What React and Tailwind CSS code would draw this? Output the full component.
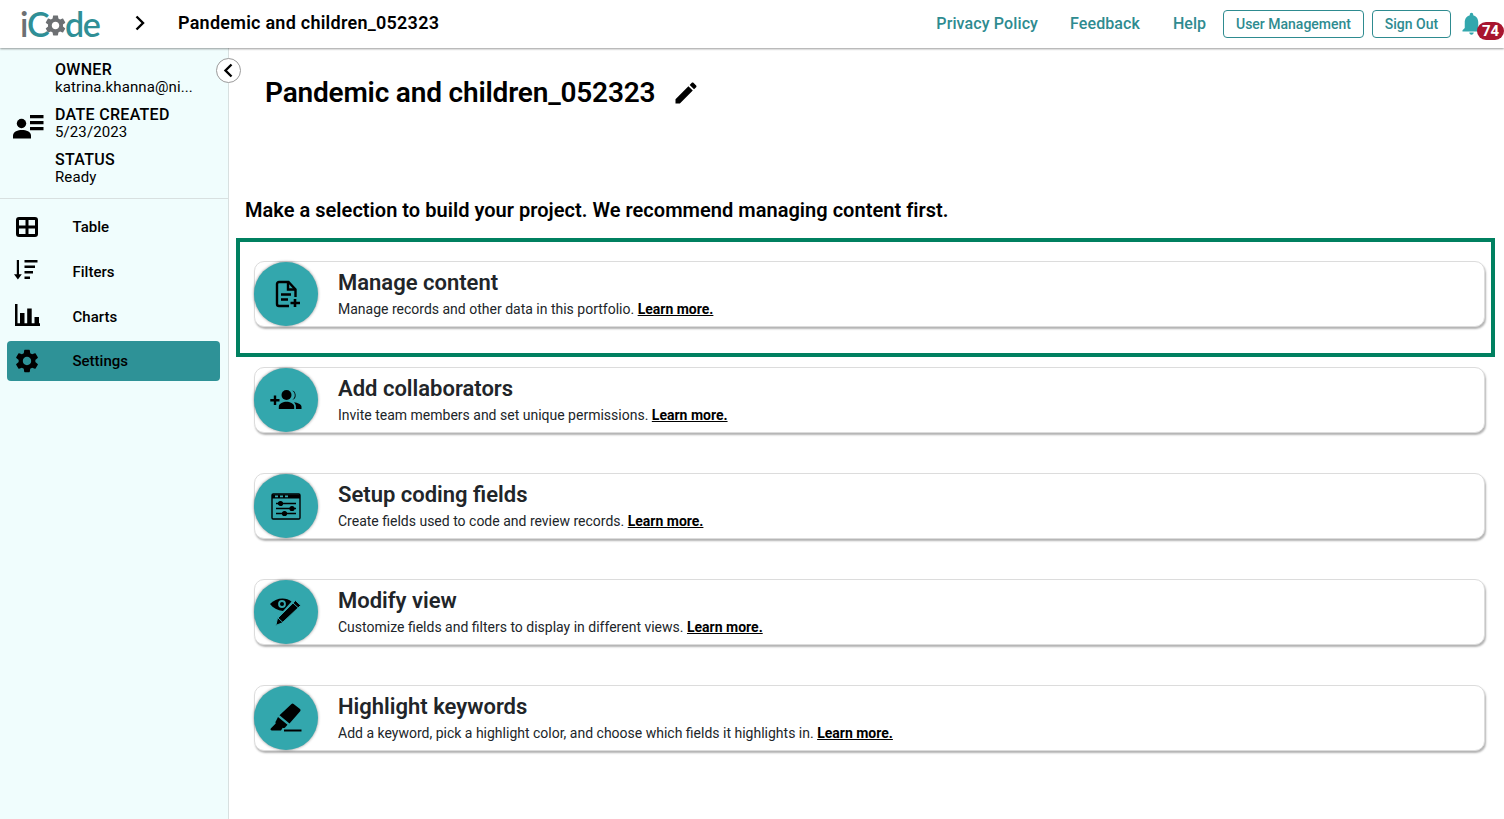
import React from 'react';

const Icon = ({ d, size = 24, className = '', children }) => (
  <svg width={size} height={size} viewBox="0 0 24 24" fill="currentColor" className={className}>
    {d ? <path d={d} /> : children}
  </svg>
);

const gearPath =
  'M19.14 12.94c.04-.3.06-.61.06-.94 0-.32-.02-.64-.07-.94l2.03-1.58c.18-.14.23-.41.12-.61l-1.92-3.32c-.12-.22-.37-.29-.59-.22l-2.39.96c-.5-.38-1.03-.7-1.62-.94l-.36-2.54c-.04-.24-.24-.41-.48-.41h-3.84c-.24 0-.43.17-.47.41l-.36 2.54c-.59.24-1.13.57-1.62.94l-2.39-.96c-.22-.08-.47 0-.59.22L2.74 8.87c-.12.21-.08.47.12.61l2.03 1.58c-.05.3-.09.63-.09.94s.02.64.07.94l-2.03 1.58c-.18.14-.23.41-.12.61l1.92 3.32c.12.22.37.29.59.22l2.39-.96c.5.38 1.03.7 1.62.94l.36 2.54c.05.24.24.41.48.41h3.84c.24 0 .44-.17.47-.41l.36-2.54c.59-.24 1.13-.56 1.62-.94l2.39.96c.22.08.47 0 .59-.22l1.92-3.32c.12-.22.07-.47-.12-.61l-2.01-1.58zM12 15.6c-1.98 0-3.6-1.62-3.6-3.6s1.62-3.6 3.6-3.6 3.6 1.62 3.6 3.6-1.62 3.6-3.6 3.6z';
const editPath =
  'M3 17.25V21h3.75L17.81 9.94l-3.75-3.75L3 17.25zM20.71 7.04c.39-.39.39-1.02 0-1.41l-2.34-2.34c-.39-.39-1.02-.39-1.41 0l-1.83 1.83 3.75 3.75 1.83-1.83z';
const bellPath =
  'M12 22c1.1 0 2-.9 2-2h-4c0 1.1.9 2 2 2zm6-6v-5c0-3.07-1.63-5.64-4.5-6.32V4c0-.83-.67-1.5-1.5-1.5s-1.5.67-1.5 1.5v.68C7.64 5.36 6 7.92 6 11v5l-2 2v1h16v-1l-2-2z';

const TableIcon = () => (
  <svg width="22" height="20" viewBox="0 0 22 20" fill="none" stroke="currentColor" strokeWidth="3">
    <rect x="1.5" y="1.5" width="19" height="17" rx="1.5" />
    <path d="M1 10h20M11 2v16" />
  </svg>
);

const FiltersIcon = () => (
  <svg width="24" height="20" viewBox="0 0 24 20" fill="currentColor" className="-translate-x-px -translate-y-[2px]">
    <path d="M2.8 0h2.2v14.2h2.8L3.9 19.6 0 14.2h2.8z" />
    <path d="M10.5 0h13v2.6h-13zM10.5 5.5h10.5v2.6H10.5zM10.5 11h8.5v2.6h-8.5zM10.5 16.5h5.5v2.6h-5.5z" />
  </svg>
);

const ChartsIcon = () => (
  <svg width="25" height="22" viewBox="0 0 25 22" fill="currentColor" className="-translate-y-[2px]">
    <path d="M0 0h2.5v19.2H25V22H0z" />
    <path d="M5 9h4.5v11H5zM12.2 4.5h4.5V20h-4.5zM19.5 13H24v7h-4.5z" />
  </svg>
);

const OwnerIcon = () => (
  <svg width="31" height="24" viewBox="0 0 31 24" fill="currentColor" className="mt-[8px]">
    <circle cx="8.5" cy="8.5" r="4.7" />
    <path d="M0 23.5v-3.2c0-3.6 5-5.4 9-5.4s9 1.8 9 5.4v3.2z" />
    <path d="M17 0h13.5v3.2H17zM17 6h13.5v3.2H17zM17 12h13.5v3.2H17z" />
  </svg>
);

const ManageIcon = () => (
  <svg width="28" height="28" viewBox="0 0 28 28" fill="none" stroke="currentColor" strokeWidth="2.4">
    <path d="M23.5 17V9.5L16.5 2H7a2 2 0 0 0-2 2v20a2 2 0 0 0 2 2h10" />
    <path d="M16 2v7.5h7.5" />
    <path d="M9 14.5h10M9 19.5h7" />
    <path d="M23 19v8M18.5 23H28" strokeWidth="2.6" />
  </svg>
);

const CollabIcon = () => (
  <svg width="32" height="22" viewBox="0 0 32 22" fill="currentColor">
    <path d="M3.8 6.5h2.4V10h3.3v2.4H6.2V16H3.8v-3.6H.3V10h3.5z" />
    <circle cx="16.5" cy="6" r="5" />
    <path d="M8.8 20v-2.2c0-3.4 4.6-5 7.7-5s7.7 1.6 7.7 5V20z" />
    <path d="M21 1.2A5 5 0 0 1 22 11a5.6 5.6 0 0 0 .1-9.6z" />
    <path d="M24 13.2c3.5.5 7.5 1.8 7.5 4.6V20h-5.6v-2.4c0-1.8-.8-3.3-1.9-4.4z" />
  </svg>
);

const CodingIcon = () => (
  <svg width="30" height="27" viewBox="0 0 30 27" fill="none" stroke="currentColor" strokeWidth="1.4">
    <rect x="1" y="1" width="28" height="25" rx="1.2" />
    <path d="M1 3.5h28" strokeWidth="4" />
    <path d="M4 3.4h3M9 3.4h3M14 3.4h3" stroke="#33a7ad" strokeWidth="1.6" />
    <path d="M5 10.5h20M5 15.5h20M5 20.5h20" />
    <circle cx="9.5" cy="10.5" r="1.9" fill="currentColor" />
    <circle cx="21" cy="15.5" r="1.9" fill="currentColor" />
    <circle cx="13.5" cy="20.5" r="1.9" fill="currentColor" />
  </svg>
);

const ModifyIcon = () => (
  <svg width="32" height="28" viewBox="0 0 32 28" fill="currentColor">
    <path d="M0 6C3 2.5 8 .5 12.5.5c3.5 0 6.5 1 9 3L13 13C7.5 12.5 3 10 0 6z" />
    <circle cx="12" cy="6" r="3.9" fill="#33a7ad" />
    <circle cx="12" cy="6" r="2" />
    <path d="M25.5 2.6l5.2 4.8L12 25l-6.2 2.4 1.6-6.8z" stroke="#33a7ad" strokeWidth="1" />
    <path d="M8 20l5 4.6M23 5l5 4.6" fill="none" stroke="#33a7ad" strokeWidth="1" />
  </svg>
);

const HighlightIcon = () => (
  <svg width="32" height="30" viewBox="0 0 32 30" fill="currentColor">
    <path d="M21.5 1a1.6 1.6 0 0 1 2.1-.1l6.4 5.2a1.6 1.6 0 0 1 .2 2.2L19.5 20.5 9.5 12.3z" />
    <path d="M8 14l9.5 7.8-2.4 2.6c-.7.7-1.6.8-2.4.4L11 27.5H2c-1.4 0-2-1.2-1-2.3l4.7-4.7c-.4-.8-.3-1.7.3-2.4z" />
    <path d="M14 26.5h17.5v2H14z" />
  </svg>
);

const navItems = [
  { label: 'Table', icon: <TableIcon /> },
  { label: 'Filters', icon: <FiltersIcon /> },
  { label: 'Charts', icon: <ChartsIcon /> },
  { label: 'Settings', icon: <Icon d={gearPath} size={28} />, active: true },
];

const cards = [
  { title: 'Manage content', text: 'Manage records and other data in this portfolio.', icon: <ManageIcon /> },
  { title: 'Add collaborators', text: 'Invite team members and set unique permissions.', icon: <CollabIcon /> },
  { title: 'Setup coding fields', text: 'Create fields used to code and review records.', icon: <CodingIcon /> },
  { title: 'Modify view', text: 'Customize fields and filters to display in different views.', icon: <ModifyIcon /> },
  { title: 'Highlight keywords', text: 'Add a keyword, pick a highlight color, and choose which fields it highlights in.', icon: <HighlightIcon /> },
];

const Card = ({ title, text, icon }) => (
  <div className="flex h-[66px] items-center gap-5 rounded-[10px] border border-[#dcdcdc] bg-white shadow-[1px_2px_2px_rgba(0,0,0,0.3)]">
    <div className="-ml-px flex h-[64px] w-[64px] shrink-0 items-center justify-center rounded-full bg-[#33a7ad] text-black shadow-[0_0_3px_rgba(0,0,0,0.45)]">
      {icon}
    </div>
    <div className="text-[#212529]">
      <div className="text-[22px] leading-[27px] font-semibold">{title}</div>
      <div className="mt-[3px] text-[14px] leading-[20px]">
        {text} <a className="font-bold text-black underline">Learn more.</a>
      </div>
    </div>
  </div>
);

export default function App() {
  return (
    <div className="flex h-[819px] w-[1504px] flex-col overflow-hidden bg-white font-['Roboto',sans-serif] text-black">
      {/* Header */}
      <header className="z-10 flex h-[48px] shrink-0 items-center bg-white pl-5 shadow-[0_1px_2px_rgba(0,0,0,0.4)]">
        <div className="flex w-[88px] items-center font-['Lato',sans-serif] text-[34px] leading-none font-semibold tracking-[-1.5px] text-[#2f8f96]">
          <span className="text-[#6d7073]">i</span>
          <span>C</span>
          <Icon d={gearPath} size={25} className="mt-[3px] -mr-[3px] -ml-[5px] text-[#6d7073]" />
          <span>de</span>
        </div>
        <svg width="12" height="16" viewBox="0 0 12 16" fill="none" stroke="currentColor" strokeWidth="2.4" className="ml-[26px] -translate-y-px">
          <path d="M2.5 1.5 9 8l-6.5 6.5" />
        </svg>
        <div className="mb-[3px] ml-[32px] text-[18px] font-semibold tracking-[0.25px]">Pandemic and children_052323</div>
        <nav className="ml-auto flex items-center text-[#2e8b90]">
          <a className="text-[16px] font-medium tracking-[0.12px]">Privacy Policy</a>
          <a className="ml-8 text-[16px] font-medium tracking-[0.1px]">Feedback</a>
          <a className="ml-[33px] text-[16px] font-medium">Help</a>
          <button className="ml-[17px] h-[28px] w-[141px] rounded-[4px] border border-[#2e8b90] text-[14px] font-medium">User Management</button>
          <button className="ml-2 h-[28px] w-[79px] rounded-[4px] border border-[#2e8b90] text-[14px] font-medium">Sign Out</button>
          <div className="relative mr-[22px] ml-[7px] h-[28px] w-[24px] text-[#33a7ad]">
            <Icon d={bellPath} size={27} />
            <span className="absolute top-[12px] left-[19px] flex h-[18px] w-[27px] items-center justify-center rounded-[10px] bg-[#a8152f] text-[15px] font-bold text-white">74</span>
          </div>
        </nav>
      </header>

      <div className="flex min-h-0 flex-1">
        {/* Sidebar */}
        <aside className="relative w-[229px] shrink-0 border-r border-[#d8e0e0] bg-[#f0fdfd]">
          <button className="absolute top-[10px] -right-[13px] flex h-[25px] w-[25px] items-center justify-center rounded-full border border-[#9a9a9a] bg-white">
            <svg width="11" height="15" viewBox="0 0 11 15" fill="none" stroke="currentColor" strokeWidth="2.4">
              <path d="M8.5 1.5 2.5 7.5l6 6" />
            </svg>
          </button>
          <div className="flex h-[151px] items-center border-b border-[#d8e0e0] pl-[13px]">
            <OwnerIcon />
            <div className="ml-[11px] flex flex-col gap-[10px]">
              {[
                ['OWNER', 'katrina.khanna@ni...'],
                ['DATE CREATED', '5/23/2023'],
                ['STATUS', 'Ready'],
              ].map(([label, value]) => (
                <div key={label}>
                  <div className="text-[16px] leading-[17px] font-medium tracking-[0.3px]">{label}</div>
                  <div className="mt-px text-[15px] leading-[17px] tracking-[0.1px]">{value}</div>
                </div>
              ))}
            </div>
          </div>
          <div className="flex flex-col pt-[8px] pr-[8px] pl-[7px]">
            {navItems.map((item) => (
              <div
                key={item.label}
                className={`flex h-[40px] items-center rounded-[4px] ${item.active ? '-mt-px bg-[#2e9297]' : 'mb-[5px]'}`}
              >
                <div className="flex w-[40px] justify-center">{item.icon}</div>
                <span className="ml-[25.5px] text-[15px] leading-none font-medium">{item.label}</span>
              </div>
            ))}
          </div>
        </aside>

        {/* Main */}
        <main className="min-w-0 flex-1 pt-[26px] pl-[7px]">
          <div className="flex items-center pl-[29px]">
            <h1 className="text-[28px] leading-[38px] font-semibold tracking-[-0.18px]">Pandemic and children_052323</h1>
            <Icon d={editPath} size={28} className="ml-[17px]" />
          </div>
          <p className="mt-[86px] pl-[9px] text-[20px] leading-[24px] font-semibold tracking-[0.03px]">
            Make a selection to build your project. We recommend managing content first.
          </p>
          <div className="mt-[16px] mr-[9px] border-[4px] border-[#008060] pt-[19px] pr-[6px] pb-[26px] pl-[14px]">
            <Card {...cards[0]} />
          </div>
          <div className="mt-[10px] mr-[19px] ml-[18px] flex flex-col gap-[40px]">
            {cards.slice(1).map((card) => (
              <Card key={card.title} {...card} />
            ))}
          </div>
        </main>
      </div>
    </div>
  );
}
